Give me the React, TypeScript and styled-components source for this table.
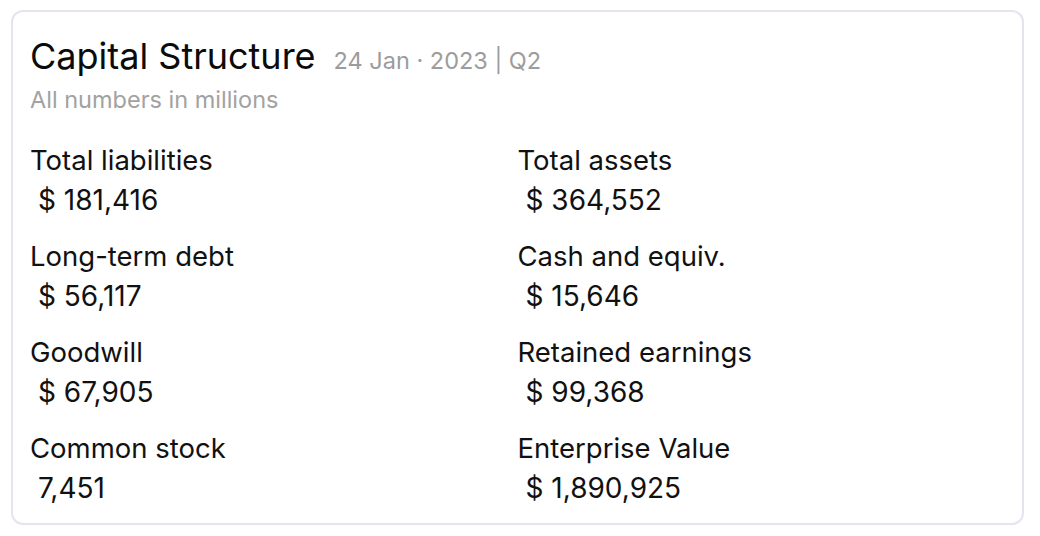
import React from 'react';
import styled, { createGlobalStyle } from 'styled-components';

const GlobalStyle = createGlobalStyle`
  body {
    margin: 0;
    background: #ffffff;
    font-family: Inter, "Liberation Sans", sans-serif;
    color: #111111;
  }
`;

const Page = styled.div`
  padding: 10px 11px;
`;

const Card = styled.section`
  box-sizing: border-box;
  width: 1013px;
  height: 515px;
  border: 2px solid #e3e4ef;
  border-radius: 12px;
  padding: 16px 17px 16px 17px;
  background: #ffffff;
`;

const Header = styled.div`
  display: flex;
  align-items: baseline;
  gap: 18px;
  line-height: 56px;
`;

const Title = styled.h1`
  margin: 0;
  font-size: 36px;
  font-weight: 400;
  color: #0b0b0b;
`;

const Stamp = styled.span`
  font-size: 23.5px;
  color: #9c9c9c;
`;

const Note = styled.div`
  font-size: 23.5px;
  line-height: 30px;
  margin-top: -4px;
  color: #a2a2a2;
`;

const Grid = styled.div`
  display: grid;
  grid-template-columns: 1fr 1fr;
  row-gap: 16px;
  margin-top: 25px;
`;

const Item = styled.div`
  display: flex;
  flex-direction: column;
`;

const Label = styled.div`
  font-size: 27.5px;
  line-height: 40px;
  color: #111111;
`;

const Value = styled.div`
  font-size: 28px;
  line-height: 40px;
  padding-left: 8px;
  color: #111111;
`;

type Entry = { label: string; value: string; currency?: boolean };

const entries: Entry[] = [
  { label: 'Total liabilities', value: '181,416', currency: true },
  { label: 'Total assets', value: '364,552', currency: true },
  { label: 'Long-term debt', value: '56,117', currency: true },
  { label: 'Cash and equiv.', value: '15,646', currency: true },
  { label: 'Goodwill', value: '67,905', currency: true },
  { label: 'Retained earnings', value: '99,368', currency: true },
  { label: 'Common stock', value: '7,451' },
  { label: 'Enterprise Value', value: '1,890,925', currency: true },
];

export default function App() {
  return (
    <Page>
      <GlobalStyle />
      <Card>
        <Header>
          <Title>Capital Structure</Title>
          <Stamp>24 Jan · 2023 | Q2</Stamp>
        </Header>
        <Note>All numbers in millions</Note>
        <Grid>
          {entries.map((e) => (
            <Item key={e.label}>
              <Label>{e.label}</Label>
              <Value>{e.currency ? `$ ${e.value}` : e.value}</Value>
            </Item>
          ))}
        </Grid>
      </Card>
    </Page>
  );
}
